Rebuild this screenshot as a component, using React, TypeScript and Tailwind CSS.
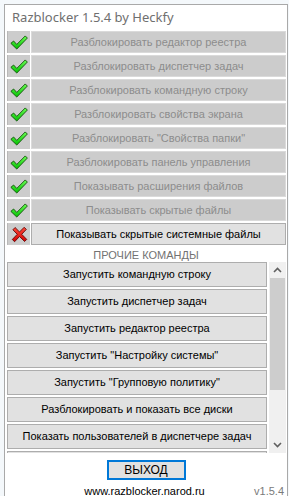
import React from "react";

const checks = [
  "Разблокировать редактор реестра",
  "Разблокировать диспетчер задач",
  "Разблокировать командную строку",
  "Разблокировать свойства экрана",
  'Разблокировать "Свойства папки"',
  "Разблокировать панель управления",
  "Показывать расширения файлов",
  "Показывать скрытые файлы",
];

const commands = [
  "Запустить командную строку",
  "Запустить диспетчер задач",
  "Запустить редактор реестра",
  'Запустить "Настройку системы"',
  'Запустить "Групповую политику"',
  "Разблокировать и показать все диски",
  "Показать пользователей в диспетчере задач",
];

const Check = () => (
  <svg width="18" height="15" viewBox="0 0 17 14">
    <defs>
      <linearGradient id="gc" x1="0" y1="0" x2="0" y2="1">
        <stop offset="0" stopColor="#6dff55" />
        <stop offset="1" stopColor="#00c000" />
      </linearGradient>
    </defs>
    <path
      d="M0.8 7.8 L3.4 5.6 L6.4 8.8 L14.4 0.8 L16.4 2.8 L6.4 13.2 Z"
      fill="url(#gc)"
      stroke="#0a4a00"
      strokeWidth="0.8"
      strokeLinejoin="round"
    />
  </svg>
);

const Cross = () => (
  <svg width="17" height="17" viewBox="0 0 16 16">
    <defs>
      <linearGradient id="gx" x1="0" y1="0" x2="0" y2="1">
        <stop offset="0" stopColor="#ff4a3a" />
        <stop offset="1" stopColor="#d00000" />
      </linearGradient>
    </defs>
    <path
      d="M1.8 3.6 L3.8 1.4 L8 5.6 L12.4 1.2 L14.4 3.2 L10.1 7.8 L14.8 12.6 L12.8 14.6 L8 9.9 L3.4 14.8 L1.2 12.7 L5.9 7.8 Z"
      fill="url(#gx)"
      stroke="#5a0000"
      strokeWidth="0.8"
      strokeLinejoin="round"
    />
  </svg>
);

export default function App() {
  return (
    <div
      className="w-[289px] h-[496px] overflow-hidden bg-[#f4f8fb] pt-[4px] pl-[4px] pr-[1px]"
      style={{ fontFamily: '"Liberation Sans", Arial, sans-serif' }}
    >
      <div className="h-[520px] bg-white border-l border-t border-r border-[#a9a9a9] flex flex-col">
        <div
          className="h-[26px] flex items-center pl-[7px] text-[13px] text-[#6f6f6f]"
          style={{ fontFamily: '"Noto Sans", "Open Sans", sans-serif' }}
        >
          Razblocker 1.5.4 by Heckfy
        </div>

        <div className="flex flex-col gap-[2px] pl-[2px] pr-[1px]">
          {checks.map((t) => (
            <div key={t} className="flex h-[22px] gap-[1px]">
              <div className="w-[23px] bg-[#cccccc] border-l border-[#b8b8b8] flex items-center justify-center">
                <Check />
              </div>
              <div className="flex-1 bg-[#cccccc] border border-[#dadada] flex items-center justify-center text-[11px] text-[#8d8d8d]">
                {t}
              </div>
            </div>
          ))}
          <div className="flex h-[22px] gap-[1px]">
            <div className="w-[23px] bg-[#cccccc] border-l border-[#b8b8b8] flex items-center justify-center">
              <Cross />
            </div>
            <div className="flex-1 bg-[#e1e1e1] border border-[#adadad] flex items-center justify-center text-[11px] text-black">
              Показывать скрытые системные файлы
            </div>
          </div>
        </div>

        <div className="h-[17px] flex items-end justify-center pb-[1px] leading-none text-[11px] text-[#727272]">
          ПРОЧИЕ КОМАНДЫ
        </div>

        <div className="flex h-[191px] pl-[2px] pr-[1px] gap-[2px] overflow-hidden">
          <div className="flex-1 flex flex-col gap-[2px]">
            {commands.map((c) => (
              <div
                key={c}
                className="h-[25px] shrink-0 bg-[#e1e1e1] border border-[#adadad] flex items-center justify-center text-[11px] text-black"
              >
                {c}
              </div>
            ))}
            {/* next item, scrolled out of view */}
            <div className="h-[25px] shrink-0 bg-[#e1e1e1] border border-[#adadad]" />
          </div>
          <div className="w-[17px] bg-[#f0f0f0] flex flex-col">
            <div className="h-[16px] flex items-center justify-center">
              <svg width="9" height="6" viewBox="0 0 9 6">
                <path d="M1 5 L4.5 1.5 L8 5" fill="none" stroke="#606060" strokeWidth="1.6" />
              </svg>
            </div>
            <div className="h-[112px] mx-[1px] bg-[#cdcdcd]" />
            <div className="flex-1" />
            <div className="h-[16px] flex items-center justify-center">
              <svg width="9" height="6" viewBox="0 0 9 6">
                <path d="M1 1 L4.5 4.5 L8 1" fill="none" stroke="#606060" strokeWidth="1.6" />
              </svg>
            </div>
          </div>
        </div>

        <div className="flex justify-center mt-[7px]">
          <div className="w-[79px] h-[20px] bg-[#e1e1e1] border-2 border-[#0078d7] flex items-center justify-center text-[12px] leading-[14px] text-black">
            ВЫХОД
          </div>
        </div>

        <div className="relative h-[16px] mt-[3px] flex items-center justify-center text-[11px] leading-none text-black">
          <span className="ml-[-3px]">www.razblocker.narod.ru</span>
          <span className="absolute right-[3px] text-[#7a7a7a]">v1.5.4</span>
        </div>
      </div>
    </div>
  );
}
